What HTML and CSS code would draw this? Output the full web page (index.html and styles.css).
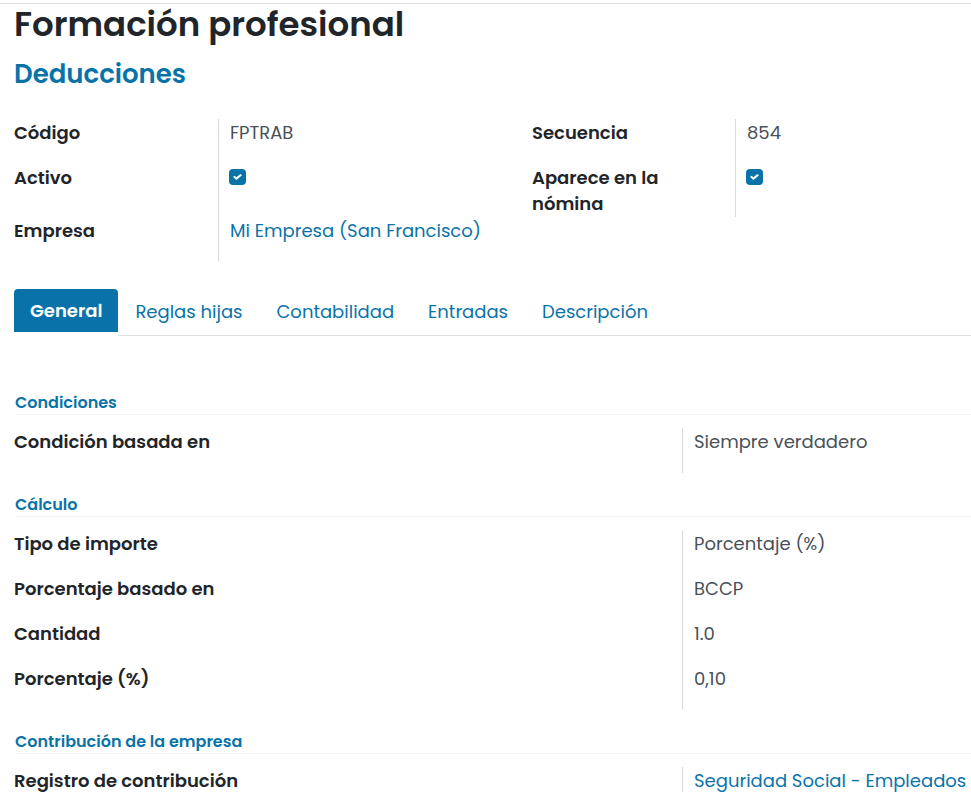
FILE: index.html
```html
<!DOCTYPE html>
<html lang="es">
<head>
<meta charset="utf-8">
<meta name="viewport" content="width=device-width, initial-scale=1">
<title>Formación profesional</title>
<link rel="stylesheet" href="styles.css">
</head>
<body>
<main class="sheet">
  <header class="heading">
    <h1 class="title">Formación profesional</h1>
    <h2 class="category"><a href="#">Deducciones</a></h2>
  </header>

  <div class="summary">
    <div class="label">Código</div>
    <div class="value">FPTRAB</div>
    <div class="label">Secuencia</div>
    <div class="value">854</div>
    <label class="label" for="active">Activo</label>
    <div class="value"><input class="check" type="checkbox" id="active" checked></div>
    <label class="label" for="on-payslip">Aparece en la nómina</label>
    <div class="value"><input class="check" type="checkbox" id="on-payslip" checked></div>
    <div class="label">Empresa</div>
    <div class="value"><a href="#">Mi Empresa (San Francisco)</a></div>
  </div>

  <nav class="tabs">
    <a class="tab active" href="#">General</a>
    <a class="tab" href="#">Reglas hijas</a>
    <a class="tab" href="#">Contabilidad</a>
    <a class="tab" href="#">Entradas</a>
    <a class="tab" href="#">Descripción</a>
  </nav>

  <div class="panel">
    <section class="group">
      <h3 class="group-title">Condiciones</h3>
      <div class="fields">
        <div class="label">Condición basada en</div>
        <div class="value">Siempre verdadero</div>
      </div>
    </section>
    <section class="group">
      <h3 class="group-title">Cálculo</h3>
      <div class="fields">
        <div class="label">Tipo de importe</div>
        <div class="value">Porcentaje (%)</div>
        <div class="label">Porcentaje basado en</div>
        <div class="value">BCCP</div>
        <div class="label">Cantidad</div>
        <div class="value">1.0</div>
        <div class="label">Porcentaje (%)</div>
        <div class="value">0,10</div>
      </div>
    </section>
    <section class="group">
      <h3 class="group-title">Contribución de la empresa</h3>
      <div class="fields">
        <div class="label">Registro de contribución</div>
        <div class="value"><a href="#">Seguridad Social - Empleados</a></div>
      </div>
    </section>
  </div>
</main>
</body>
</html>
```
FILE: styles.css
```css
* {
  box-sizing: border-box;
}

body {
  margin: 0;
  background: #fff;
  color: #212529;
  font-family: Poppins, Inter, "Liberation Sans", sans-serif;
  font-size: 18px;
  line-height: 26px;
}

a {
  color: #0973a9;
  text-decoration: none;
}

.sheet {
  min-height: 100vh;
  padding: 3px 0 0 14px;
  background: linear-gradient(#dee2e6, #dee2e6) 0 3px / 100% 1px no-repeat;
}

.title {
  margin: 0;
  font-size: 34px;
  font-weight: 600;
  line-height: 42px;
}

.category {
  margin: 13px 0 0;
  font-size: 26px;
  font-weight: 600;
  line-height: 32px;
}

.summary {
  display: grid;
  grid-template-columns: 204fr 314fr 203fr 236fr;
  grid-auto-rows: minmax(45px, auto);
  margin-top: 29px;
}

.label {
  padding: 1px 60px 0 0;
  font-weight: 600;
}

.value {
  padding: 1px 0 0 11px;
  border-left: 1px solid #dadbdd;
  color: #495057;
  white-space: nowrap;
}

.check {
  appearance: none;
  display: grid;
  place-items: center;
  width: 17px;
  height: 16px;
  margin: 4px 0 0 -1px;
  border-radius: 4px;
  background: #0973a9;
}

.check:checked::before {
  content: "";
  width: 9px;
  height: 6px;
  background: #fff;
  clip-path: polygon(0 50%, 17% 28%, 38% 54%, 82% 0, 100% 22%, 38% 100%);
}

.tabs {
  display: flex;
  height: 47px;
  margin-top: 27px;
}

.tabs::after {
  content: "";
  flex: 1;
  border-bottom: 1px solid #dee2e6;
}

.tab {
  padding: 10px 17px;
  border-bottom: 1px solid #dee2e6;
}

.tab.active {
  height: 43px;
  padding: 9px 16px;
  border: 0;
  border-radius: 4px 4px 0 0;
  background: #0973a9;
  color: #fff;
  font-weight: 600;
}

.panel {
  padding-top: 35px;
}

.group-title {
  margin: 0 0 13px 1px;
  padding-top: 20px;
  border-bottom: 1px solid #f3f4f5;
  color: #0973a9;
  font-size: 16px;
  font-weight: 600;
  line-height: 23px;
}

.fields {
  display: grid;
  grid-template-columns: 668fr 289fr;
  grid-auto-rows: minmax(45px, auto);
}

.group:last-child .fields {
  grid-auto-rows: auto;
}
```
